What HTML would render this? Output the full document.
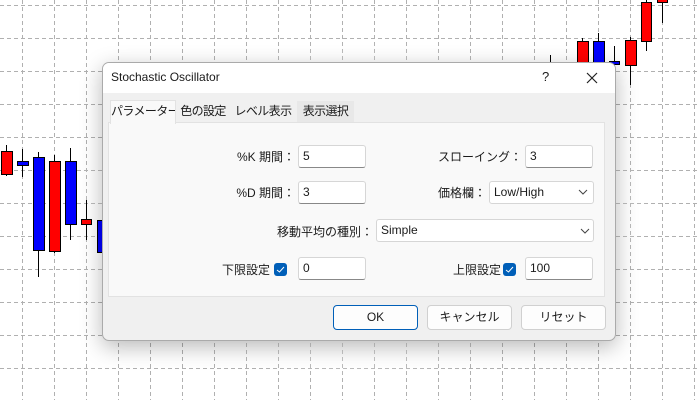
<!DOCTYPE html>
<html><head><meta charset="utf-8"><style>
body{margin:0;width:700px;height:400px;overflow:hidden;background:#fff;position:relative;font-family:"Segoe UI","Liberation Sans","Noto Sans CJK JP",sans-serif;font-size:12px;color:#1a1a1a}
.a{position:absolute;white-space:nowrap}
.dlg{left:102px;top:62px;width:512px;height:277px;background:#f0f0f0;border:1px solid #aaa;border-radius:7px;box-shadow:0 6px 22px rgba(0,0,0,.28);overflow:hidden}
.inp{background:#fff;border:1px solid #d6d6d6;border-bottom:1px solid #888;border-radius:3px;box-sizing:border-box;height:23px;padding:3px 0 0 4px;font-size:12px}
.lbl{text-align:right;font-size:12px}
.cb{width:13px;height:13px;background:#005fb8;border-radius:3px;box-sizing:border-box}
.btn{top:305px;height:25px;width:85px;background:#fdfdfd;border:1px solid #d0d0d0;border-radius:4px;box-sizing:border-box;text-align:center;line-height:23px;font-size:12px}
.tab{top:101px;height:21px;line-height:21px;font-size:12px;text-align:center;background:#f0f0f0;letter-spacing:-0.6px;overflow:hidden}
.ch{position:absolute;border:1px solid #000;box-sizing:border-box}
.w{position:absolute;width:1px;background:#000}
</style></head><body>
<svg class="a" style="left:0;top:0" width="700" height="400">
<g stroke="#b0b0b0" stroke-dasharray="4,3" stroke-width="1">
<line x1="22.5" y1="0" x2="22.5" y2="400"/><line x1="54.5" y1="0" x2="54.5" y2="400"/><line x1="86.5" y1="0" x2="86.5" y2="400"/><line x1="118.5" y1="0" x2="118.5" y2="400"/><line x1="150.5" y1="0" x2="150.5" y2="400"/><line x1="182.5" y1="0" x2="182.5" y2="400"/><line x1="214.5" y1="0" x2="214.5" y2="400"/><line x1="246.5" y1="0" x2="246.5" y2="400"/><line x1="278.5" y1="0" x2="278.5" y2="400"/><line x1="310.5" y1="0" x2="310.5" y2="400"/><line x1="342.5" y1="0" x2="342.5" y2="400"/><line x1="374.5" y1="0" x2="374.5" y2="400"/><line x1="406.5" y1="0" x2="406.5" y2="400"/><line x1="438.5" y1="0" x2="438.5" y2="400"/><line x1="470.5" y1="0" x2="470.5" y2="400"/><line x1="502.5" y1="0" x2="502.5" y2="400"/><line x1="534.5" y1="0" x2="534.5" y2="400"/><line x1="566.5" y1="0" x2="566.5" y2="400"/><line x1="598.5" y1="0" x2="598.5" y2="400"/><line x1="630.5" y1="0" x2="630.5" y2="400"/><line x1="662.5" y1="0" x2="662.5" y2="400"/><line x1="694.5" y1="0" x2="694.5" y2="400"/>
<line x1="0" y1="5.5" x2="700" y2="5.5"/><line x1="0" y1="38.5" x2="700" y2="38.5"/><line x1="0" y1="71.5" x2="700" y2="71.5"/><line x1="0" y1="104.5" x2="700" y2="104.5"/><line x1="0" y1="137.5" x2="700" y2="137.5"/><line x1="0" y1="170.5" x2="700" y2="170.5"/><line x1="0" y1="203.5" x2="700" y2="203.5"/><line x1="0" y1="236.5" x2="700" y2="236.5"/><line x1="0" y1="269.5" x2="700" y2="269.5"/><line x1="0" y1="302.5" x2="700" y2="302.5"/><line x1="0" y1="335.5" x2="700" y2="335.5"/><line x1="0" y1="368.5" x2="700" y2="368.5"/>
</g></svg>
<div class="a" style="left:70px;top:40px;width:580px;height:340px;background:radial-gradient(closest-side,rgba(255,255,255,.85),rgba(255,255,255,.6) 70%,rgba(255,255,255,0))"></div>
<div class="w" style="left:6px;top:145px;height:31px"></div><div class="ch" style="left:1px;top:151px;width:12px;height:24px;background:#f00"></div>
<div class="w" style="left:22px;top:149px;height:28px"></div><div class="ch" style="left:17px;top:161px;width:12px;height:5px;background:#00f"></div>
<div class="w" style="left:38px;top:152px;height:125px"></div><div class="ch" style="left:33px;top:157px;width:12px;height:94px;background:#00f"></div>
<div class="w" style="left:54px;top:155px;height:98px"></div><div class="ch" style="left:49px;top:161px;width:12px;height:91px;background:#f00"></div>
<div class="w" style="left:70px;top:148px;height:92px"></div><div class="ch" style="left:65px;top:161px;width:12px;height:64px;background:#00f"></div>
<div class="w" style="left:86px;top:200px;height:40px"></div><div class="ch" style="left:81px;top:219px;width:11px;height:6px;background:#f00"></div>
<div class="ch" style="left:97px;top:220px;width:10px;height:33px;background:#00f"></div>
<div class="w" style="left:550px;top:55px;height:10px"></div>
<div class="w" style="left:582px;top:38px;height:25px"></div><div class="ch" style="left:577px;top:41px;width:12px;height:22px;background:#f00"></div>
<div class="w" style="left:598px;top:33px;height:30px"></div><div class="ch" style="left:593px;top:41px;width:12px;height:22px;background:#00f"></div>
<div class="w" style="left:614px;top:46px;height:39px"></div><div class="ch" style="left:609px;top:61px;width:11px;height:4px;background:#00f"></div>
<div class="w" style="left:630px;top:37px;height:48px"></div><div class="ch" style="left:625px;top:40px;width:12px;height:26px;background:#f00"></div>
<div class="w" style="left:646px;top:0;height:51px"></div><div class="ch" style="left:641px;top:2px;width:11px;height:40px;background:#f00"></div>
<div class="w" style="left:662px;top:0;height:23px"></div><div class="ch" style="left:657px;top:-1px;width:11px;height:4px;background:#f00"></div>

<div class="a dlg">
 <div class="a" style="left:0;top:0;width:512px;height:30px;background:#fff"></div>
 <div class="a" style="left:8px;top:7px;font-size:12px">Stochastic Oscillator</div>
 <div class="a" style="left:439px;top:6px;font-size:13px">?</div>
 <svg class="a" style="left:483px;top:9px" width="12" height="12"><path d="M1 1L11 11M11 1L1 11" stroke="#222" stroke-width="1.2"/></svg>
</div>
<div class="a" style="left:108px;top:122px;width:497px;height:175px;background:#f9f9f9;border:1px solid #e2e2e2;box-sizing:border-box"></div>
<div class="a tab" style="left:110px;width:64px;top:100px;height:23px;background:#f9f9f9;border:1px solid #e2e2e2;border-bottom:none">パラメーター</div>
<div class="a tab" style="left:176px;width:54px">色の設定</div>
<div class="a tab" style="left:233px;width:60px">レベル表示</div>
<div class="a tab" style="left:297px;width:57px;background:#e8e8e8">表示選択</div>

<div class="a lbl" style="left:200px;width:95px;top:148px">%K 期間：</div>
<div class="a inp" style="left:298px;top:145px;width:68px">5</div>
<div class="a lbl" style="left:200px;width:95px;top:184px">%D 期間：</div>
<div class="a inp" style="left:298px;top:181px;width:68px">3</div>
<div class="a lbl" style="left:420px;width:102px;top:148px">スローイング：</div>
<div class="a inp" style="left:525px;top:145px;width:68px">3</div>
<div class="a lbl" style="left:400px;width:86px;top:184px">価格欄：</div>
<div class="a inp" style="left:489px;top:181px;width:105px;border-bottom-color:#d6d6d6">Low/High</div>
<svg class="a" style="left:578px;top:189px" width="10" height="6"><path d="M1 1L5 5L9 1" fill="none" stroke="#444"/></svg>
<div class="a lbl" style="left:250px;width:123px;top:223px">移動平均の種別：</div>
<div class="a inp" style="left:376px;top:219px;width:218px;border-bottom-color:#d6d6d6">Simple</div>
<svg class="a" style="left:580px;top:228px" width="10" height="6"><path d="M1 1L5 5L9 1" fill="none" stroke="#444"/></svg>
<div class="a lbl" style="left:200px;width:70px;top:261px">下限設定</div>
<div class="a cb" style="left:274px;top:263px"></div>
<svg class="a" style="left:276px;top:266px" width="9" height="7"><path d="M1 4L3.5 6L8 1" fill="none" stroke="#fff"/></svg>
<div class="a inp" style="left:298px;top:257px;width:68px">0</div>
<div class="a lbl" style="left:420px;width:81px;top:261px">上限設定</div>
<div class="a cb" style="left:503px;top:263px"></div>
<svg class="a" style="left:505px;top:266px" width="9" height="7"><path d="M1 4L3.5 6L8 1" fill="none" stroke="#fff"/></svg>
<div class="a inp" style="left:525px;top:257px;width:68px">100</div>

<div class="a btn" style="left:333px;border:1px solid #005fb8">OK</div>
<div class="a btn" style="left:427px">キャンセル</div>
<div class="a btn" style="left:521px">リセット</div>
</body></html>
